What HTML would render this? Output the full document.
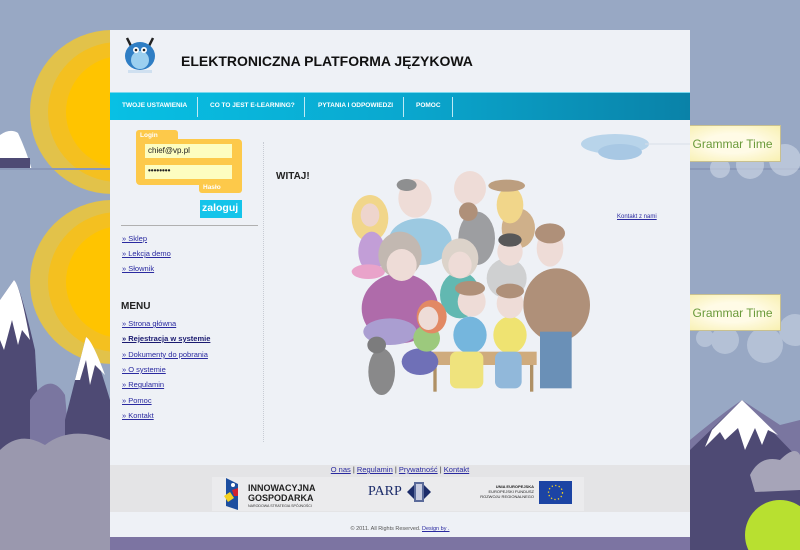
<!DOCTYPE html>
<html><head><meta charset="utf-8">
<style>
*{margin:0;padding:0;box-sizing:border-box}
body{width:800px;height:550px;overflow:hidden;position:relative;background:#98a8c4;font-family:"Liberation Sans",Arial,sans-serif}
.abs{position:absolute}
a{color:#2a2aa0}
#main{position:absolute;left:110px;top:30px;width:580px;height:507px;background:#eef1f6}
#nav{position:absolute;left:0;top:62px;width:580px;height:28px;background:linear-gradient(90deg,#08c0e4,#0aa8cf 50%,#0a82a8);border-top:1px solid #7ad8ee}
#nav span{position:absolute;top:9px;font-size:6.5px;font-weight:bold;color:#fff}
.sep{position:absolute;top:4px;width:1px;height:20px;background:#bfeaf5}
.lnk{position:absolute;left:12px;font-size:7.5px;color:#2a2aa0;text-decoration:underline}
.gt{position:absolute;left:684px;width:97px;height:37px;background:radial-gradient(ellipse at center,#fffbe6 40%,#f8f0b0);border:1px solid #c8c090;font-size:12px;color:#6a9a3a;text-align:center;line-height:36px}
</style></head><body>
<svg class="abs" style="left:0;top:0" width="800" height="550">
 <circle cx="112" cy="112" r="82" fill="#e2c24a"/>
 <circle cx="118" cy="112" r="70" fill="#f4c020"/>
 <circle cx="122" cy="112" r="56" fill="#ffc400"/>
 <path d="M0 135 Q10 128 18 133 Q26 150 32 170 L0 170Z" fill="#fff"/>
 <rect x="0" y="158" width="30" height="12" fill="#4e4a74"/>
 <rect x="0" y="168" width="800" height="2" fill="#8a98b8"/>
 <g fill="#c8d2e2" opacity="0.7"><circle cx="720" cy="168" r="10"/><circle cx="750" cy="165" r="14"/><circle cx="785" cy="160" r="16"/></g>
 <circle cx="112" cy="282" r="82" fill="#e2c24a"/>
 <circle cx="118" cy="282" r="70" fill="#f4c020"/>
 <circle cx="122" cy="282" r="56" fill="#ffc400"/>
 <path d="M0 300 L14 280 Q20 285 35 350 L40 440 L0 450Z" fill="#4e4a74"/>
 <path d="M0 300 L14 280 Q20 285 30 340 L22 330 L18 345 L12 320 L4 350 L0 340Z" fill="#fff"/>
 <path d="M30 400 Q50 370 65 395 L70 450 L30 450Z" fill="#7a76a0"/>
 <path d="M65 420 L86 337 Q92 340 110 400 L110 450 L65 450Z" fill="#4e4a74"/>
 <path d="M75 380 L86 337 Q92 340 105 375 L95 365 L90 385 L86 360 L80 380Z" fill="#fff"/>
 <path d="M0 450 Q20 430 45 445 Q70 425 110 440 L110 550 L0 550Z" fill="#9a98ae"/>
 <g fill="#c8d2e2" opacity="0.6"><circle cx="725" cy="340" r="14"/><circle cx="765" cy="345" r="18"/><circle cx="795" cy="330" r="16"/><circle cx="705" cy="338" r="9"/></g>
 <path d="M690 440 Q720 415 742 400 L780 425 L800 420 L800 550 L690 550Z" fill="#7a76a0"/>
 <path d="M690 450 L742 400 L800 460 L800 550 L690 550Z" fill="#4e4a74"/>
 <path d="M712 430 L742 400 L778 435 L768 430 L762 445 L755 428 L745 450 L738 428 L725 440 L720 432 L705 447Z" fill="#fff"/>
 <path d="M750 475 Q760 455 780 460 Q795 445 800 455 L800 490 L755 492Z" fill="#a6a4b8"/>
 <circle cx="780" cy="535" r="35" fill="#b8e030"/>
 <rect x="110" y="537" width="580" height="13" fill="#7c74a2"/>
</svg>
<div class="gt" style="top:125px">Grammar Time</div>
<div class="gt" style="top:294px">Grammar Time</div>

<div id="main">
 <svg class="abs" style="left:12px;top:6px" width="36" height="40">
  <path d="M5 2 L9 10 M31 2 L27 10" stroke="#222" stroke-width="2.5"/>
  <ellipse cx="18" cy="20" rx="15" ry="14" fill="#2f7ec4"/>
  <ellipse cx="18" cy="24" rx="9" ry="9" fill="#9cd0f0"/>
  <circle cx="14" cy="14" r="3" fill="#fff"/><circle cx="22" cy="14" r="3" fill="#fff"/>
  <circle cx="14" cy="14" r="1.3" fill="#222"/><circle cx="22" cy="14" r="1.3" fill="#222"/>
  <rect x="6" y="34" width="24" height="3" fill="#cfe0f0"/>
 </svg>
 <div class="abs" style="left:71px;top:23px;font-size:14px;font-weight:bold;color:#111">ELEKTRONICZNA PLATFORMA JĘZYKOWA</div>
 <div id="nav">
  <span style="left:12px">TWOJE USTAWIENIA</span><div class="sep" style="left:87px"></div>
  <span style="left:100px">CO TO JEST E-LEARNING?</span><div class="sep" style="left:194px"></div>
  <span style="left:208px">PYTANIA I ODPOWIEDZI</span><div class="sep" style="left:293px"></div>
  <span style="left:306px">POMOC</span><div class="sep" style="left:342px"></div>
 </div>
 <svg class="abs" style="left:460px;top:92px" width="120" height="50"><ellipse cx="45" cy="22" rx="34" ry="10" fill="#b8d4ea"/><ellipse cx="50" cy="30" rx="22" ry="8" fill="#a8c8e4"/><line x1="75" y1="22" x2="120" y2="22" stroke="#d8dee8"/></svg>
 <div class="abs" style="left:26px;top:100px;width:42px;height:12px;background:#fdc94a;border-radius:3px 3px 0 0;color:#fff;font-size:6.5px;font-weight:bold;padding:2px 4px">Login</div>
 <div class="abs" style="left:26px;top:109px;width:106px;height:46px;background:#fdc94a;border-radius:0 4px 4px 4px"></div>
 <div class="abs" style="left:89px;top:150px;width:43px;height:13px;background:#fdc94a;border-radius:0 0 3px 3px;color:#fff;font-size:6.5px;font-weight:bold;padding:4px 4px">Hasło</div>
 <div class="abs" style="left:35px;top:114px;width:87px;height:14px;background:#fdfdc0;font-size:8px;color:#222;padding:2px 3px">chief@vp.pl</div>
 <div class="abs" style="left:35px;top:135px;width:87px;height:14px;background:#fdfdc0;font-size:8px;color:#222;padding:1px 3px;font-weight:bold">••••••••</div>
 <div class="abs" style="left:90px;top:170px;width:42px;height:18px;background:#14c4ea;color:#fff;font-size:10.5px;font-weight:bold;padding:2px 2px">zaloguj</div>
 <div class="abs" style="left:11px;top:195px;width:137px;height:1px;background:#b0b0b0"></div>
 <div class="abs" style="left:153px;top:112px;width:0;height:300px;border-left:1px dotted #c8ccd4"></div>
 <div class="lnk" style="top:204px">» Sklep</div>
 <div class="lnk" style="top:219px">» Lekcja demo</div>
 <div class="lnk" style="top:234px">» Słownik</div>
 <div class="abs" style="left:11px;top:271px;font-size:10px;font-weight:bold;color:#222">MENU</div>
 <div class="lnk" style="top:289px">» Strona główna</div>
 <div class="lnk" style="top:304px;font-weight:bold;color:#1a1a70">» Rejestracja w systemie</div>
 <div class="lnk" style="top:320px">» Dokumenty do pobrania</div>
 <div class="lnk" style="top:335px">» O systemie</div>
 <div class="lnk" style="top:350px">» Regulamin</div>
 <div class="lnk" style="top:366px">» Pomoc</div>
 <div class="lnk" style="top:381px">» Kontakt</div>
 <div class="abs" style="left:166px;top:141px;font-size:10px;font-weight:bold;color:#222">WITAJ!</div>
 <div class="abs" style="left:507px;top:184px;font-size:6px;color:#2a2aa0;text-decoration:underline">Kontakt z nami</div>
 <div class="abs" style="left:0;top:435px;width:580px;height:47px;background:#e4e4e6"></div>
 <div class="abs" style="left:0;top:435px;width:580px;text-align:center;font-size:7.5px;color:#333"><u style="color:#2a2aa0">O nas</u> | <u style="color:#2a2aa0">Regulamin</u> | <u style="color:#2a2aa0">Prywatność</u> | <u style="color:#2a2aa0">Kontakt</u></div>
 <div class="abs" style="left:102px;top:447px;width:372px;height:34px;background:#ebebed"></div>
 <svg class="abs" style="left:112px;top:446px" width="20" height="36"><path d="M4 2 L16 8 L16 34 L4 30Z" fill="#1c4ea0"/><path d="M2 20 L8 16 L12 22 L6 26Z" fill="#f4d020"/><path d="M10 14 L16 12 L16 20 L12 20Z" fill="#d02030"/><circle cx="11" cy="9" r="2" fill="#fff"/></svg>
 <div class="abs" style="left:138px;top:454px;font-size:9px;font-weight:bold;color:#222;line-height:9.5px">INNOWACYJNA<br>GOSPODARKA</div>
 <div class="abs" style="left:138px;top:474px;font-size:3.6px;color:#333">NARODOWA STRATEGIA SPÓJNOŚCI</div>
 <div class="abs" style="left:258px;top:454px;font-family:'Liberation Serif',serif;font-size:14px;color:#1c2c6a">PARP</div>
 <svg class="abs" style="left:297px;top:451px" width="24" height="22"><path d="M0 11 L8 3 L8 19Z M24 11 L16 3 L16 19Z" fill="#1c2c6a"/><rect x="7" y="1" width="10" height="20" fill="#5a6a9a"/><rect x="9" y="3" width="6" height="16" fill="#c8cce0"/></svg>
 <div class="abs" style="left:368px;top:454px;font-size:4px;color:#222;text-align:right;width:56px;line-height:5px"><b>UNIA EUROPEJSKA</b><br>EUROPEJSKI FUNDUSZ<br>ROZWOJU REGIONALNEGO</div>
 <svg class="abs" style="left:429px;top:451px" width="33" height="23"><rect width="33" height="23" fill="#1c44a4"/><circle cx="16.5" cy="11.5" r="7" fill="none" stroke="#f4d020" stroke-width="1.3" stroke-dasharray="1.3 2.3"/></svg>
 <div class="abs" style="left:0;top:496px;width:580px;text-align:center;font-size:5.5px;color:#555">© 2011. All Rights Reserved. <u style="color:#2a2aa0">Design by .</u></div>
</div>

<svg class="abs" style="left:340px;top:165px;opacity:0.8" width="270" height="250" viewBox="0 0 810 750">
 <ellipse cx="90" cy="160" rx="55" ry="70" fill="#f2d070"/>
 <ellipse cx="90" cy="150" rx="28" ry="35" fill="#efcfc4"/>
 <ellipse cx="95" cy="260" rx="40" ry="60" fill="#b88ad0"/>
 <ellipse cx="85" cy="320" rx="50" ry="22" fill="#e890c0"/>
 <ellipse cx="240" cy="230" rx="95" ry="70" fill="#88c0dc"/>
 <ellipse cx="225" cy="100" rx="50" ry="58" fill="#efd8d0"/>
 <ellipse cx="200" cy="60" rx="30" ry="18" fill="#777"/>
 <ellipse cx="410" cy="220" rx="55" ry="80" fill="#8a8a8c"/>
 <ellipse cx="390" cy="70" rx="48" ry="52" fill="#efd8d0"/>
 <ellipse cx="385" cy="140" rx="28" ry="28" fill="#a0785a"/>
 <ellipse cx="535" cy="190" rx="50" ry="60" fill="#c8a070"/>
 <ellipse cx="510" cy="120" rx="40" ry="55" fill="#f2d070"/>
 <ellipse cx="500" cy="62" rx="55" ry="18" fill="#b08a62"/>
 <ellipse cx="500" cy="340" rx="60" ry="60" fill="#c8c8c8"/>
 <ellipse cx="510" cy="260" rx="38" ry="42" fill="#efd8d0"/>
 <ellipse cx="510" cy="225" rx="35" ry="20" fill="#333"/>
 <ellipse cx="360" cy="390" rx="60" ry="70" fill="#40aaa0"/>
 <ellipse cx="360" cy="280" rx="55" ry="60" fill="#d8ccc0"/>
 <ellipse cx="360" cy="300" rx="35" ry="40" fill="#efd8d0"/>
 <ellipse cx="650" cy="420" rx="100" ry="110" fill="#a0785a"/>
 <rect x="600" y="500" width="95" height="170" fill="#4a78a8"/>
 <ellipse cx="630" cy="250" rx="40" ry="55" fill="#efd8d0"/>
 <ellipse cx="630" cy="205" rx="45" ry="30" fill="#a0785a"/>
 <ellipse cx="180" cy="430" rx="115" ry="105" fill="#a04a98"/>
 <ellipse cx="150" cy="500" rx="80" ry="40" fill="#9a8ac8"/>
 <ellipse cx="180" cy="270" rx="65" ry="70" fill="#b8aaa0"/>
 <ellipse cx="185" cy="300" rx="45" ry="48" fill="#efd8d0"/>
 <rect x="270" y="560" width="320" height="40" fill="#c89a60"/>
 <rect x="280" y="600" width="10" height="80" fill="#a07840"/><rect x="570" y="600" width="10" height="80" fill="#a07840"/>
 <ellipse cx="240" cy="590" rx="55" ry="40" fill="#5050a8"/>
 <ellipse cx="260" cy="520" rx="40" ry="40" fill="#88c060"/>
 <ellipse cx="275" cy="455" rx="45" ry="50" fill="#e07040"/>
 <ellipse cx="265" cy="460" rx="30" ry="35" fill="#efd8d0"/>
 <ellipse cx="390" cy="510" rx="50" ry="55" fill="#58a8d8"/>
 <rect x="330" y="560" width="100" height="110" rx="20" fill="#f0e060"/>
 <ellipse cx="395" cy="410" rx="42" ry="45" fill="#efd8d0"/>
 <ellipse cx="390" cy="370" rx="45" ry="22" fill="#a0785a"/>
 <ellipse cx="510" cy="510" rx="50" ry="55" fill="#f0e050"/>
 <rect x="465" y="560" width="80" height="110" rx="20" fill="#7aaad4"/>
 <ellipse cx="510" cy="415" rx="40" ry="45" fill="#efd8d0"/>
 <ellipse cx="510" cy="378" rx="42" ry="22" fill="#a0785a"/>
 <ellipse cx="125" cy="620" rx="40" ry="70" fill="#707070"/>
 <ellipse cx="110" cy="540" rx="28" ry="25" fill="#606060"/>
</svg>
</body></html>
